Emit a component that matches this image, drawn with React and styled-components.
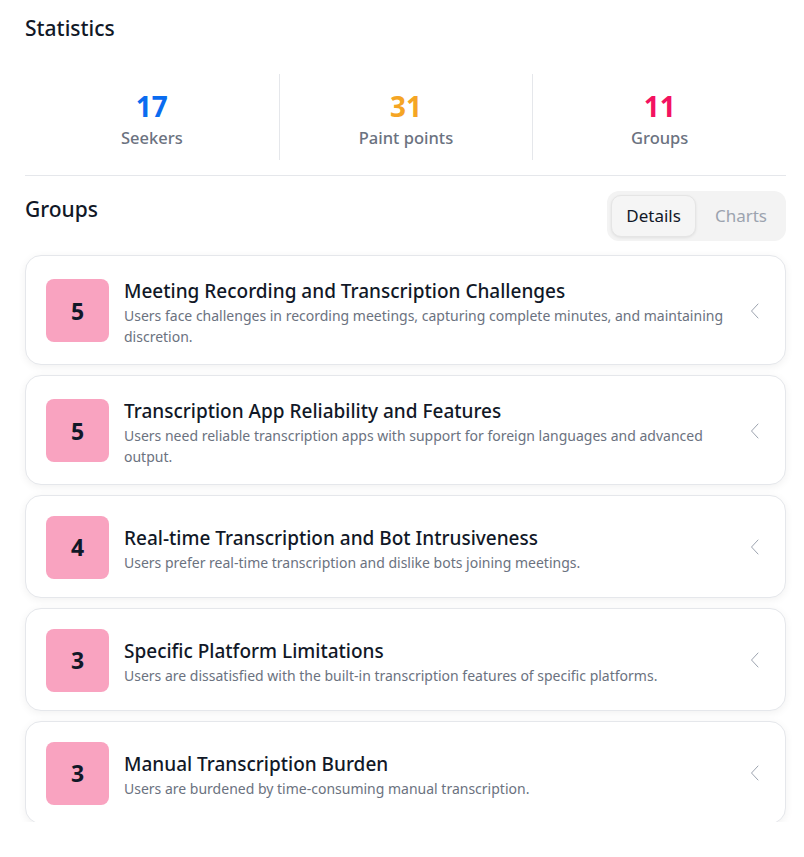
import React from "react";
import styled, { createGlobalStyle } from "styled-components";

const Global = createGlobalStyle`
  html, body { margin: 0; padding: 0; background: #fff; }
  body { font-family: "Noto Sans", "Open Sans", sans-serif; color: #111827; }
`;

const Page = styled.div`
  height: 822px;
  overflow: hidden;
  padding: 0 18px 0 25px;
  box-sizing: border-box;
`;

const Heading = styled.h2`
  margin: 0;
  font-size: 21px;
  font-weight: 500;
  line-height: 28px;
  color: #111827;
`;

const StatsSection = styled.section`
  padding-top: 14px;
`;

const StatsRow = styled.div`
  display: grid;
  grid-template-columns: repeat(3, 1fr);
  margin-top: 32px;
  padding-bottom: 15px;
  border-bottom: 1px solid #e5e7eb;
`;

const Stat = styled.div`
  display: flex;
  flex-direction: column;
  align-items: center;
  box-sizing: border-box;
  height: 86px;
  padding-top: 14px;
  border-left: ${(p) => (p.$first ? "none" : "1px solid #e5e7eb")};
`;

const StatValue = styled.div`
  font-size: 28px;
  font-weight: 700;
  line-height: 36px;
  color: ${(p) => p.$color};
`;

const StatLabel = styled.div`
  font-size: 16.5px;
  font-weight: 500;
  line-height: 28px;
  color: #6b7280;
`;

const GroupsHeader = styled.div`
  display: flex;
  justify-content: space-between;
  align-items: flex-start;
  margin-top: 19px;
`;

const Toggle = styled.div`
  display: flex;
  gap: 4px;
  padding: 4px;
  background: #f3f3f3;
  border-radius: 12px;
  margin-top: -4px;
`;

const ToggleButton = styled.button`
  font-family: inherit;
  font-size: 17px;
  line-height: 24px;
  padding: 8px 14px;
  border-radius: 10px;
  cursor: pointer;
  border: 1px solid ${(p) => (p.$active ? "#e5e5e5" : "transparent")};
  background: ${(p) => (p.$active ? "#f5f5f5" : "transparent")};
  color: ${(p) => (p.$active ? "#111827" : "#9ca3af")};
  box-shadow: ${(p) => (p.$active ? "0 1px 3px rgba(0,0,0,0.08)" : "none")};
`;

const List = styled.div`
  display: flex;
  flex-direction: column;
  gap: 10px;
  margin-top: 14px;
`;

const Card = styled.div`
  display: flex;
  align-items: center;
  gap: 15px;
  box-sizing: border-box;
  min-height: 103px;
  padding: 18px 26px 17px 20px;
  border: 1px solid #e5e7eb;
  border-radius: 16px;
  background: #fff;
  box-shadow: 0 2px 8px rgba(0, 0, 0, 0.06);
`;

const Badge = styled.div`
  flex: 0 0 63px;
  height: 63px;
  border-radius: 8px;
  background: #f9a3c0;
  display: flex;
  align-items: center;
  justify-content: center;
  font-size: 23px;
  font-weight: 700;
  color: #111827;
`;

const Body = styled.div`
  flex: 1;
  min-width: 0;
  padding-top: 3px;
`;

const Title = styled.div`
  font-size: 19px;
  font-weight: 500;
  line-height: 28px;
  color: #111827;
`;

const Desc = styled.div`
  font-size: 14px;
  line-height: 21px;
  color: #6b7280;
`;

const Chevron = styled.div`
  flex: 0 0 auto;
  display: flex;
  color: #9ca3af;
  padding-left: 12px;
`;

const ChevronIcon = () => (
  <svg width="9" height="16" viewBox="0 0 9 16" fill="none">
    <path d="M8 1L1.5 8L8 15" stroke="currentColor" strokeWidth="1" strokeLinecap="round" strokeLinejoin="round" />
  </svg>
);

const stats = [
  { value: 17, label: "Seekers", color: "#0a6cf0" },
  { value: 31, label: "Paint points", color: "#f5a524" },
  { value: 11, label: "Groups", color: "#f31260" },
];

const groups = [
  {
    n: 5,
    title: "Meeting Recording and Transcription Challenges",
    desc: "Users face challenges in recording meetings, capturing complete minutes, and maintaining discretion.",
  },
  {
    n: 5,
    title: "Transcription App Reliability and Features",
    desc: "Users need reliable transcription apps with support for foreign languages and advanced output.",
  },
  {
    n: 4,
    title: "Real-time Transcription and Bot Intrusiveness",
    desc: "Users prefer real-time transcription and dislike bots joining meetings.",
  },
  {
    n: 3,
    title: "Specific Platform Limitations",
    desc: "Users are dissatisfied with the built-in transcription features of specific platforms.",
  },
  {
    n: 3,
    title: "Manual Transcription Burden",
    desc: "Users are burdened by time-consuming manual transcription.",
  },
];

export default function App() {
  return (
    <>
      <Global />
      <Page>
        <StatsSection>
          <Heading>Statistics</Heading>
          <StatsRow>
            {stats.map((s, i) => (
              <Stat key={s.label} $first={i === 0}>
                <StatValue $color={s.color}>{s.value}</StatValue>
                <StatLabel>{s.label}</StatLabel>
              </Stat>
            ))}
          </StatsRow>
        </StatsSection>
        <GroupsHeader>
          <Heading>Groups</Heading>
          <Toggle>
            <ToggleButton $active>Details</ToggleButton>
            <ToggleButton>Charts</ToggleButton>
          </Toggle>
        </GroupsHeader>
        <List>
          {groups.map((g) => (
            <Card key={g.title}>
              <Badge>{g.n}</Badge>
              <Body>
                <Title>{g.title}</Title>
                <Desc>{g.desc}</Desc>
              </Body>
              <Chevron>
                <ChevronIcon />
              </Chevron>
            </Card>
          ))}
        </List>
      </Page>
    </>
  );
}
